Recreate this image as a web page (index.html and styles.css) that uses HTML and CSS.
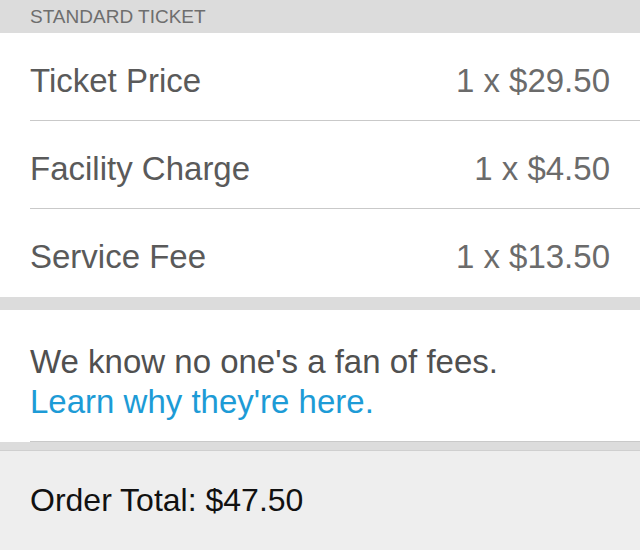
FILE: index.html
```html
<!DOCTYPE html>
<html lang="en">
<head>
<meta charset="UTF-8">
<meta name="viewport" content="width=device-width, initial-scale=1.0">
<title>Order Summary</title>
<link rel="stylesheet" href="styles.css">
</head>
<body>
  <div class="section-header">STANDARD TICKET</div>
  <div class="fee-list">
    <div class="fee-row">
      <span class="fee-name">Ticket Price</span>
      <span class="fee-value">1 x $29.50</span>
    </div>
    <div class="fee-row">
      <span class="fee-name">Facility Charge</span>
      <span class="fee-value">1 x $4.50</span>
    </div>
    <div class="fee-row">
      <span class="fee-name">Service Fee</span>
      <span class="fee-value">1 x $13.50</span>
    </div>
  </div>
  <div class="fee-note">
    <div class="note-inner">
      <p>We know no one's a fan of fees.</p>
      <a href="#" class="note-link">Learn why they're here.</a>
    </div>
  </div>
  <div class="order-total">Order Total: $47.50</div>
</body>
</html>
```

FILE: styles.css
```css
body {
  margin: 0;
  padding: 0;
  background-color: #dcdcdc;
  font-family: "Liberation Sans", Arial, sans-serif;
}
.section-header {
  height: 33px;
  line-height: 33px;
  padding-left: 30px;
  font-size: 19px;
  color: #6e6e6e;
}
.fee-list {
  background-color: white;
  padding-left: 30px;
}
.fee-row {
  display: flex;
  justify-content: space-between;
  align-items: center;
  height: 88px;
  padding: 8px 30px 0 0;
  box-sizing: border-box;
  border-bottom: 1px solid #c9c9c9;
  font-size: 33px;
}
.fee-row:last-child {
  border-bottom: none;
}
.fee-name {
  color: #5a5a5a;
}
.fee-value {
  color: #6b6b6b;
}
.fee-note {
  background-color: white;
  margin-top: 13px;
  padding-left: 30px;
}
.note-inner {
  padding: 32px 0 19px 0;
  border-bottom: 1px solid #c9c9c9;
  font-size: 33px;
  line-height: 40px;
}
.note-inner p {
  margin: 0;
  color: #505050;
}
.note-link {
  color: #1d9bd6;
  text-decoration: none;
}
.order-total {
  margin-top: 8px;
  border-top: 1px solid #cfcfcf;
  background-color: #eeeeee;
  height: 100px;
  padding: 29px 0 0 30px;
  box-sizing: border-box;
  font-size: 32px;
  line-height: 40px;
  color: #111;
}
```
